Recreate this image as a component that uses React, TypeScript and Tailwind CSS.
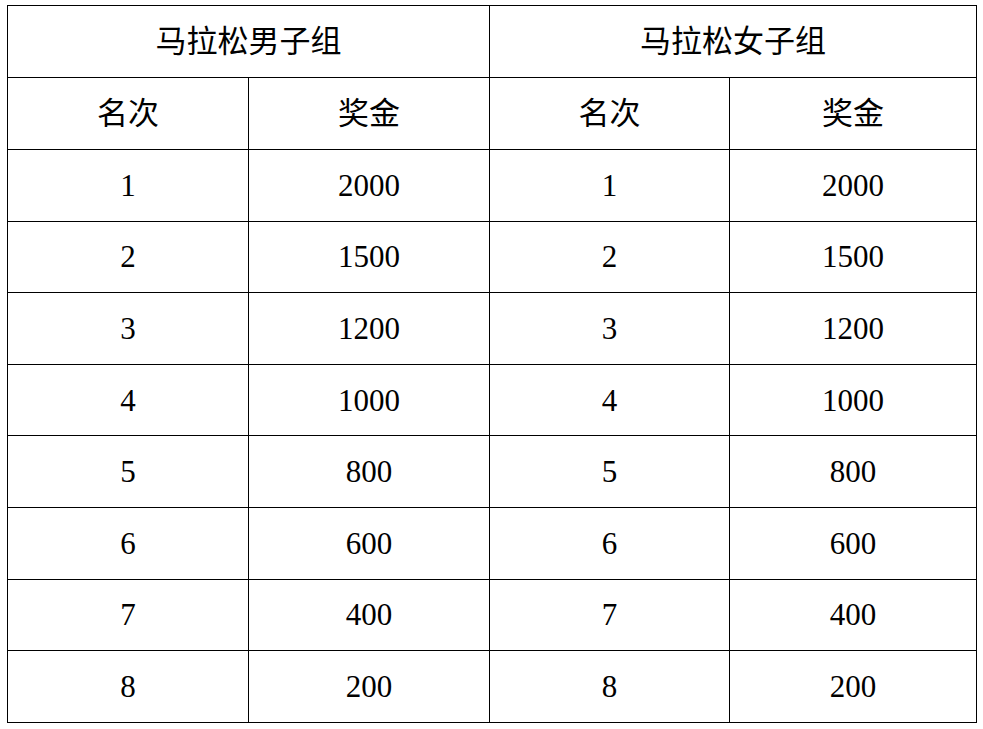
import React from 'react';

const rows = [
    { rank: '1', prize: '2000' },
    { rank: '2', prize: '1500' },
    { rank: '3', prize: '1200' },
    { rank: '4', prize: '1000' },
    { rank: '5', prize: '800' },
    { rank: '6', prize: '600' },
    { rank: '7', prize: '400' },
    { rank: '8', prize: '200' },
];

const cell = 'border border-black text-center align-middle p-0';

export default function App() {
    return (
        <div
            className="min-h-screen bg-white pl-[7px] pt-[5px] text-black"
            style={{ fontFamily: '"Liberation Serif", "Noto Sans CJK SC", serif' }}
        >
            <table className="table-fixed border-collapse w-[969px] text-[31px] leading-none">
                <colgroup>
                    <col className="w-[241px]" />
                    <col className="w-[241px]" />
                    <col className="w-[240px]" />
                    <col className="w-[247px]" />
                </colgroup>
                <tbody>
                    {/* 组别 */}
                    <tr className="h-[72px]">
                        <td colSpan={2} className={cell}>马拉松男子组</td>
                        <td colSpan={2} className={cell}>马拉松女子组</td>
                    </tr>
                    <tr className="h-[72px]">
                        <td className={cell}>名次</td>
                        <td className={cell}>奖金</td>
                        <td className={cell}>名次</td>
                        <td className={cell}>奖金</td>
                    </tr>
                    {rows.map((r) => (
                        <tr key={r.rank} className="h-[71.6px]">
                            <td className={cell}>{r.rank}</td>
                            <td className={cell}>{r.prize}</td>
                            <td className={cell}>{r.rank}</td>
                            <td className={cell}>{r.prize}</td>
                        </tr>
                    ))}
                </tbody>
            </table>
        </div>
    );
}
